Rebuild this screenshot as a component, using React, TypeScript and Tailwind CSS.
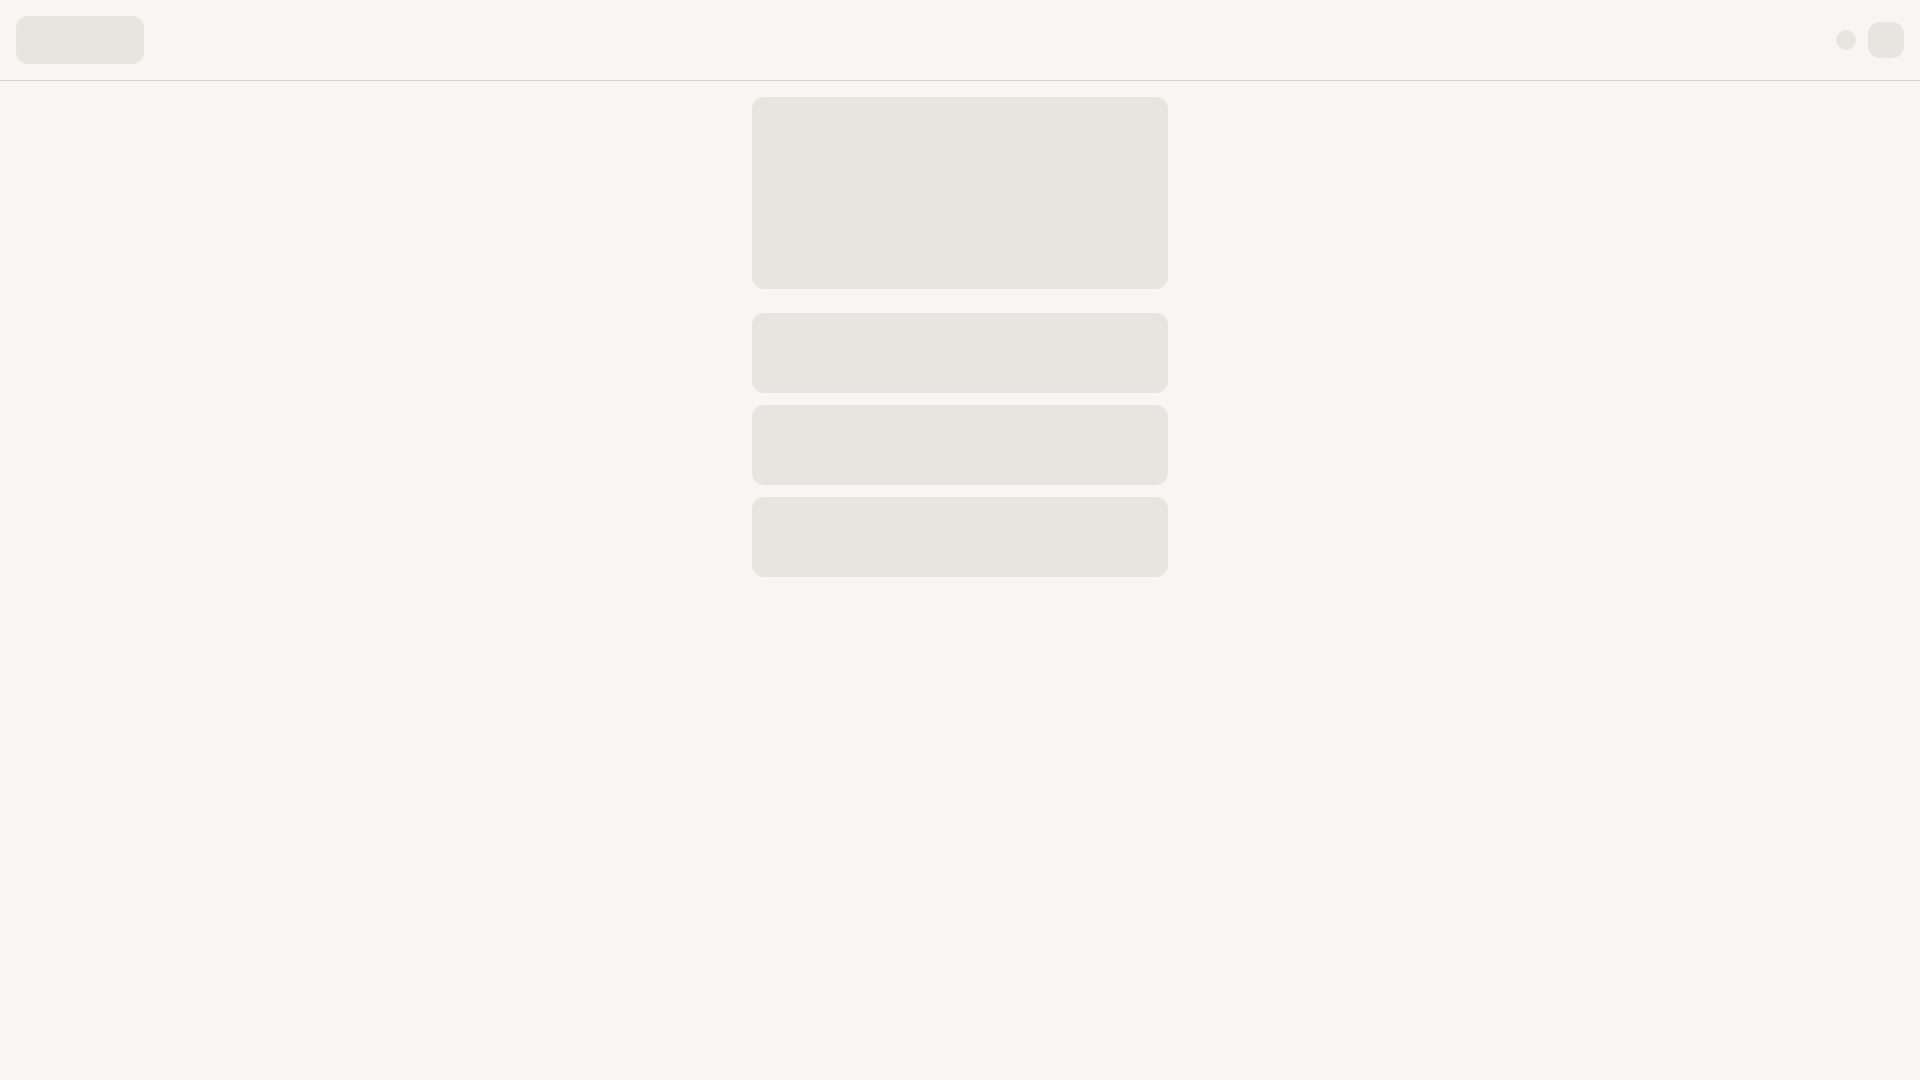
export default function App() {
  return (
    <div className="min-h-screen bg-[#f7f6f2] font-['Inter',sans-serif]">
      <header className="flex h-[81px] items-center justify-between border-b border-[#d9d1c8] px-4">
        <div className="h-12 w-32 rounded-xl bg-[#e6e5e0]" />
        <div className="flex items-center gap-3">
          <div className="h-5 w-5 rounded-full bg-[#e6e5e0]" />
          <div className="h-9 w-9 rounded-xl bg-[#e6e5e0]" />
        </div>
      </header>
      <main className="mx-auto flex max-w-md flex-col px-4 py-4">
        <div className="h-48 rounded-xl bg-[#e6e5e0]" />
        <div className="mt-6 flex flex-col gap-3">
          <div className="h-20 rounded-xl bg-[#e6e5e0]" />
          <div className="h-20 rounded-xl bg-[#e6e5e0]" />
          <div className="h-20 rounded-xl bg-[#e6e5e0]" />
        </div>
      </main>
    </div>
  );
}
